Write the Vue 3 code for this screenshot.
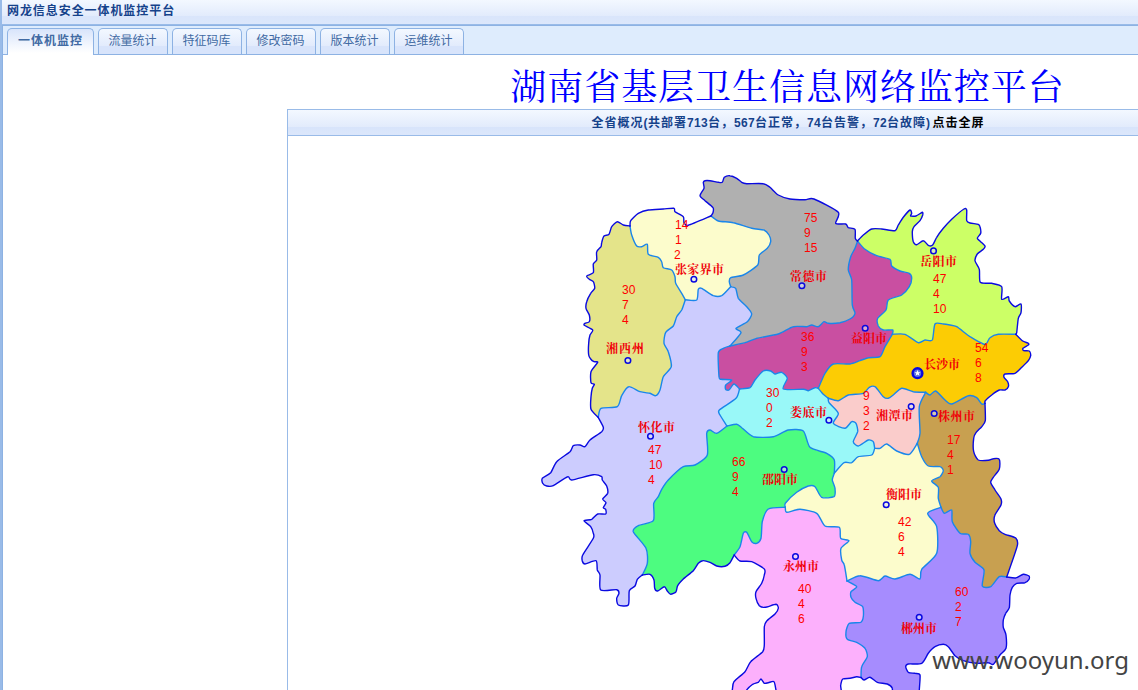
<script setup>
const tabs = ['流量统计', '特征码库', '修改密码', '版本统计', '运维统计']

const summary = [
  { t: '全省概况' }, { t: '(', n: true }, { t: '共部署' }, { t: '713', n: true }, { t: '台，' },
  { t: '567', n: true }, { t: '台正常，' }, { t: '74', n: true }, { t: '台告警，' },
  { t: '72', n: true }, { t: '台故障' }, { t: ')', n: true },
]

// Region junctions, in map pixels.
const nodes = {
  A: [630, 226], B: [711, 216], C: [857.5, 241], D: [1015.7, 334.3], E: [985, 403.3],
  F: [1006.7, 577], G: [861, 677.5], H: [734.2, 555], I: [642.3, 575], J: [598.3, 417.5],
  K: [685.3, 299.8], L: [730.7, 286.7], M: [730, 346], N: [739.5, 389], O: [727, 426],
  P: [818.3, 388.3], Q: [892.3, 334.3], R: [828.3, 398.3], S: [925.7, 392.3], T: [917.3, 443.3],
  U: [874.7, 448.3], V: [834.3, 473.3], W: [785.3, 507.3], X: [847, 581], Y: [941, 507.3],
}

// Boundary arcs: from, to, origin x, origin y, then points at three units per pixel.
const arcs = {
  o1: ['J', 'A', 530, 200, '183,628 183,590 187,565 193,553 183,548 183,515 203,487 192,485 182,477 176,465 176,430 180,405 188,390 163,376 165,370 178,365 178,345 168,325 170,305 182,280 194,265 190,245 178,238 170,228 190,218 190,192 200,180 200,155 213,140 215,128 222,108 237,103 245,80 262,65 280,75'],
  o2: ['A', 'B', 530, 200, '302,62 325,40 355,30 400,27 432,25 435,35 460,50 462,68 475,76'],
  o3: ['B', 'C', 690, 160, '69,158 69,143 45,122 30,107 42,85 40,67 45,62 60,62 85,67 97,67 103,52 120,47 140,55 155,67 170,71 220,71 240,82 265,105 300,117 345,119 372,117 445,157 437,190 467,192 475,203 495,208 496,235'],
  o4: ['C', 'D', 840, 190, '70,135 95,117 125,117 165,122 175,105 190,82 210,60 215,70 212,78 228,78 247,67 248,75 240,92 222,110 217,125 220,155 230,164 250,152 265,166 278,165 290,142 310,115 335,88 372,57 380,60 380,92 390,99 415,103 420,110 422,130 412,145 422,155 435,168 430,178 412,192 405,212 418,238 421,277 455,280 485,290 485,328 505,320 508,333 525,350 543,342 543,368 535,385 530,428'],
  o5: ['D', 'E', 840, 190, '547,452 565,460 565,465 549,475 551,482 568,483 572,497 565,512 545,532 525,550 495,552 492,562 503,575 505,590 495,600 478,600 455,615 436,632'],
  o6: ['E', 'F', 860, 370, '376,152 365,170 348,188 341,205 341,245 355,270 385,271 400,266 418,268 418,297 400,322 392,337 405,360 423,387 423,405 404,437 404,460 418,482 435,493 467,504 472,527'],
  o7: ['F', 'G', 840, 540, '527,114 550,103 567,108 567,118 555,128 530,130 517,142 510,165 508,203 497,220 490,240 490,262 498,285 498,325 480,345 460,373 445,368 410,370 370,362 345,347 325,320 310,313 285,320 265,340 245,370 205,372 197,380 205,397 225,400 240,405 238,450 238,480 160,480 157,445 142,432 112,427 90,412 72,420'],
  o8: ['G', 'H', 700, 490, '470,560 450,565 428,567 422,585 412,630 235,630 228,600 222,575 205,578 193,580 183,567 175,577 158,583 140,600 120,640 90,640 97,600 102,575 135,545 152,515 188,485 193,465 193,410 200,393 225,372 235,355 228,343 195,352 178,347 168,325 168,305 185,280 193,255 193,237 155,215 120,213'],
  o9: ['H', 'I', 530, 380, '600,548 585,559 560,558 540,547 518,542 505,550 490,572 460,597 443,617 438,635 422,643 412,633 403,620 383,633 374,625 372,600 360,583'],
  o10: ['I', 'J', 530, 380, '322,598 315,618 298,632 295,675 265,675 260,655 267,640 260,629 212,630 210,585 202,570 198,542 165,552 157,543 158,525 190,475 190,460 182,440 162,422 185,418 203,402 227,402 227,388 220,383 228,368 218,357 233,340 230,318 217,300 215,290 190,284 125,300 113,290 70,317 50,318 38,310 37,295 62,278 80,245 120,215 130,197 150,195 165,200 180,180 215,155 220,142'],
  i1: ['A', 'K', 530, 200, '305,105 320,138 335,140 352,133 355,163 385,172 395,185 400,203 425,210 435,230 437,250 455,280'],
  i2: ['K', 'J', 530, 200, '455,330 440,350 430,378 407,397 402,430 415,455 424,500 400,530 390,570 377,587 360,580 330,575 296,560 275,587 262,620 213,625'],
  i3: ['K', 'L', 530, 200, '500,300 505,268 515,265 550,287 575,287'],
  i4: ['B', 'L', 690, 160, '85,183 130,188 185,205 222,210 237,225 242,245 232,265 208,285 203,315 160,345 122,353 118,365'],
  i5: ['L', 'M', 690, 160, '137,385 145,415 170,440 185,462 172,485 138,505 153,518'],
  i6: ['M', 'C', 690, 160, '165,548 200,535 265,522 310,500 350,500 365,495 385,500 402,485 415,490 450,488 480,477 495,460 487,435 485,360 475,330 482,290 495,265'],
  i7: ['M', 'N', 690, 160, '100,565 85,578 87,650 93,658 125,660 107,675 107,688 117,690 132,672'],
  i8: ['N', 'P', 700, 360, '150,83 165,60 190,33 212,33 225,42 245,37 262,55 250,87 310,88 325,92 345,83'],
  i9: ['P', 'Q', 840, 190, '-45,550 -20,522 30,522 60,512 85,503 120,500 135,470'],
  i10: ['C', 'Q', 840, 190, '75,178 110,197 150,208 155,228 180,243 208,250 215,265 208,290 185,315 145,330 138,360 113,385 115,408 130,420 158,420'],
  i11: ['Q', 'D', 840, 190, '195,433 235,458 255,450 277,450 285,402 310,402 330,405 350,410 390,440 430,462 440,460 450,443 475,433'],
  i12: ['P', 'R', 700, 360, '370,103'],
  i13: ['R', 'S', 860, 370, '-65,92 -35,75 10,70 28,52 45,50 70,80 85,85 100,75 125,55 160,65'],
  i14: ['S', 'E', 860, 370, '210,75 227,63 255,90 275,102 325,77 350,83 365,102'],
  i15: ['S', 'T', 860, 370, '178,110 180,190'],
  i16: ['R', 'U', 700, 360, '387,128 415,160 400,190 435,205 455,185 468,190 473,215 460,245 475,258 505,240 520,245'],
  i17: ['U', 'T', 860, 370, '60,235 80,222 110,243 148,253'],
  i18: ['U', 'V', 700, 360, '515,285 475,290 455,308 432,308'],
  i19: ['O', 'V', 700, 360, '110,193 125,203 160,230 220,230 265,210 310,213 330,262 380,280 403,300'],
  i20: ['N', 'O', 700, 360, '108,115 58,150 60,165'],
  i21: ['I', 'O', 530, 380, '352,550 348,505 310,455 325,437 370,422 371,370 385,350 395,328 415,300 460,260 495,255 532,225 530,160 540,150 560,160'],
  i22: ['V', 'W', 700, 360, '397,360 405,385 402,410 365,412 345,380 325,378 290,397 256,430'],
  i23: ['H', 'W', 700, 490, '120,170 130,130 140,127 155,155 170,160 183,145 187,95 205,57'],
  i24: ['W', 'X', 700, 490, '260,67 300,58 350,70 375,108 418,112 422,145 447,152 423,175 425,210 433,225'],
  i25: ['T', 'Y', 860, 370, '185,260 205,288 240,290 250,302 240,320 215,333 235,352 235,385'],
  i26: ['Y', 'F', 860, 370, '253,430 275,420 277,455 300,490 325,493 332,515 330,550 345,577 372,600 367,648 392,650 418,620'],
  i27: ['Y', 'X', 860, 370, '203,430 230,470 230,550 185,598 180,627 150,613 105,627 75,618 55,632 0,617'],
  i28: ['X', 'G', 840, 540, '50,140 33,155 33,172 45,187 68,200 70,230 62,247 28,250 18,275 22,298 50,307 75,325 82,350 65,380'],
}

const regions = [
  ['#e4e48a', 'o1 i1 i2'],
  ['#fcfccc', 'o2 i4 -i3 -i1'],
  ['#b0b0b0', 'o3 -i6 -i5 -i4'],
  ['#c94fa1', 'i6 i10 -i9 -i8 -i7'],
  ['#ccff66', 'o4 -i11 -i10'],
  ['#fccc04', 'i11 o5 -i14 -i13 -i12 i9'],
  ['#facccb', 'i13 i15 -i17 -i16'],
  ['#c8a050', 'i14 o6 -i26 -i25 -i15'],
  ['#99f8f8', 'i8 i12 i16 i18 -i19 -i20'],
  ['#4dfc80', 'i19 i22 -i23 o9 i21'],
  ['#ccccfe', 'o10 -i2 i3 i5 i7 i20 -i21'],
  ['#fcfccc', 'i17 i25 i27 -i24 -i22 -i18'],
  ['#fcb0fc', 'i23 i24 i28 o8'],
  ['#a68cfe', 'i26 o7 -i28 -i27'],
]

const points = {}
for (const [k, [a, b, ox, oy, s]] of Object.entries(arcs)) {
  const mid = s.split(' ').map((p) => {
    const [x, y] = p.split(',').map(Number)
    return [ox + x / 3, oy + y / 3]
  })
  points[k] = [nodes[a], ...mid, nodes[b]]
}

// Cubic segments through the points, with a light tension.
function curve(p) {
  const k = 0.12
  let d = ''
  for (let i = 0; i < p.length - 1; i++) {
    const a = p[i - 1] || p[i]
    const b = p[i]
    const c = p[i + 1]
    const e = p[i + 2] || c
    const n = [b[0] + (c[0] - a[0]) * k, b[1] + (c[1] - a[1]) * k, c[0] - (e[0] - b[0]) * k, c[1] - (e[1] - b[1]) * k, c[0], c[1]]
    d += 'C' + n.map((v) => v.toFixed(1)).join(' ')
  }
  return d
}

const fills = regions.map(([color, list]) => {
  const parts = list.split(' ').map((k) => (k[0] === '-' ? [...points[k.slice(1)]].reverse() : points[k]))
  return { color, d: 'M' + parts[0][0].join(' ') + parts.map(curve).join('') + 'Z' }
})
const lines = Object.keys(points)
  .sort()
  .map((k) => ({ k, outer: k[0] === 'o', d: 'M' + points[k][0].join(' ') + curve(points[k]) }))

// name, label x / baseline, label width, marker x / y, figures x / first baseline
const cities = [
  { name: '张家界市', x: 675, y: 274, w: 49, mx: 693.7, my: 279, nums: [[675, 14], [675, 1], [674, 2]], ny: 229 },
  { name: '湘西州', x: 606, y: 353, w: 38, mx: 627.7, my: 360.3, nums: [[622, 30], [622, 7], [622, 4]], ny: 294 },
  { name: '常德市', x: 790, y: 281, w: 37, mx: 801.7, my: 285.5, nums: [[804, 75], [804, 9], [804, 15]], ny: 222 },
  { name: '岳阳市', x: 920, y: 266, w: 37, mx: 933.3, my: 250.7, nums: [[933, 47], [933, 4], [933, 10]], ny: 283 },
  { name: '益阳市', x: 851, y: 343, w: 36, mx: 865, my: 328, nums: [[801, 36], [801, 9], [801, 3]], ny: 341 },
  { name: '长沙市', x: 924, y: 369, w: 36, nums: [[975, 54], [975, 6], [975, 8]], ny: 352 },
  { name: '湘潭市', x: 876, y: 420, w: 37, mx: 911, my: 406.3, nums: [[863, 9], [863, 3], [863, 2]], ny: 400 },
  { name: '株州市', x: 938, y: 421, w: 37, mx: 934, my: 413.3, nums: [[947, 17], [947, 4], [947, 1]], ny: 444 },
  { name: '娄底市', x: 790, y: 417, w: 37, mx: 828.7, my: 420, nums: [[766, 30], [766, 0], [766, 2]], ny: 397 },
  { name: '怀化市', x: 638, y: 432, w: 37, mx: 650.3, my: 436, nums: [[648, 47], [649, 10], [648, 4]], ny: 454 },
  { name: '邵阳市', x: 762, y: 484, w: 36, mx: 784, my: 469.3, nums: [[732, 66], [732, 9], [732, 4]], ny: 466 },
  { name: '衡阳市', x: 886, y: 499, w: 36, mx: 886, my: 504.5, nums: [[898, 42], [898, 6], [898, 4]], ny: 526 },
  { name: '永州市', x: 783, y: 571, w: 36, mx: 795.3, my: 556.3, nums: [[798, 40], [798, 4], [798, 6]], ny: 593 },
  { name: '郴州市', x: 901, y: 633, w: 36, mx: 919, my: 617, nums: [[955, 60], [955, 2], [955, 7]], ny: 596 },
]
</script>

<template>
  <div class="app">
    <div class="topbar">网龙信息安全一体机监控平台</div>
    <div class="body">
      <div class="tabs">
        <div class="tab active">一体机监控</div>
        <div v-for="t in tabs" :key="t" class="tab">{{ t }}</div>
      </div>
      <div class="content">
        <h1 class="headline">湖南省基层卫生信息网络监控平台</h1>
        <div class="panel">
          <div class="panel-head">
            <span v-for="(s, i) in summary" :key="i" :class="s.n ? 'num' : 'cjk'">{{ s.t }}</span>
            <span class="full">点击全屏</span>
          </div>
          <svg class="map" width="850" height="554" viewBox="288 136 850 554">
            <path v-for="(f, i) in fills" :key="i" :d="f.d" :fill="f.color" />
            <path v-for="l in lines" :key="l.k" :d="l.d" :class="l.outer ? 'outer' : 'inner'" />
            <g v-for="c in cities" :key="c.name">
              <text :x="c.x" :y="c.y" class="city" :textLength="c.w">{{ c.name }}</text>
              <circle v-if="c.mx" :cx="c.mx + 0.2" :cy="c.my + 0.2" r="2.8" class="dot" />
              <text v-for="(n, i) in c.nums" :key="i" :x="n[0]" :y="c.ny + i * 15" class="fig">{{ n[1] }}</text>
            </g>
            <g>
              <circle cx="917.5" cy="373.2" r="4.9" class="capital" />
              <path d="M917.5 370.1l.9 2.1h2.1l-1.7 1.4.6 2.2-1.9-1.3-1.9 1.3.6-2.2-1.7-1.4h2.1z" class="star" />
            </g>
          </svg>
        </div>
      </div>
    </div>
    <div class="watermark">www.wooyun.org</div>
  </div>
</template>

<style>
body {
  margin: 0;
  overflow: hidden;
}
</style>

<style scoped>
.app {
  position: relative;
  box-sizing: border-box;
  width: 1138px;
  height: 690px;
  overflow: hidden;
  border-left: 2px solid #99bbe8;
  background: #fff;
  font-family: "Liberation Sans", "Noto Sans CJK SC", sans-serif;
  font-size: 12px;
  display: flex;
  flex-direction: column;
}
.topbar {
  box-sizing: border-box;
  height: 25px;
  flex: none;
  padding-left: 5px;
  line-height: 23px;
  border-bottom: 1px solid #99bbe8;
  background: linear-gradient(#f3f8ff 0, #e2ebfc 16px, #d9e5fb 16px, #dce7fb 100%);
  color: #15428b;
  font-weight: bold;
  letter-spacing: 0.93px;
}
.body {
  flex: 1;
  border-left: 1px solid #8db2e3;
  border-top: 1px solid #8db2e3;
  display: flex;
  flex-direction: column;
}
.tabs {
  box-sizing: border-box;
  height: 29px;
  flex: none;
  display: flex;
  align-items: flex-end;
  gap: 4px;
  padding-left: 4px;
  background: #deecfd;
  border-bottom: 1px solid #8db2e3;
}
.tab {
  box-sizing: border-box;
  width: 70px;
  height: 26px;
  padding-right: 1px;
  border: 1px solid #8db2e3;
  border-bottom: 0;
  border-radius: 5px 5px 0 0;
  background: linear-gradient(#f3f8ff 0, #e2ebfc 17px, #d8e4fb 17px, #d8e4fb 100%);
  color: #416aa3;
  line-height: 25px;
  text-align: center;
}
.tab.active {
  width: 87px;
  height: 27px;
  padding-right: 0;
  margin-bottom: -1px;
  background: linear-gradient(#d8e4fb, #fff 24px);
  font-weight: bold;
  letter-spacing: 1px;
}
.content {
  flex: 1;
  padding-left: 284px;
}
.headline {
  width: 1000px;
  height: 54px;
  margin: 0;
  padding: 6px 0 0 1px;
  box-sizing: border-box;
  line-height: 48px;
  font-family: "Noto Serif CJK SC", "Noto Sans CJK SC", serif;
  font-size: 36px;
  letter-spacing: 0.97px;
  font-weight: 400;
  text-align: center;
  color: #00f;
}
.panel {
  width: 1000px;
  border: 1px solid #99bbe8;
}
.panel-head {
  box-sizing: border-box;
  height: 26px;
  border-bottom: 1px solid #99bbe8;
  background: linear-gradient(#f3f8ff 0, #e2ebfc 17px, #d8e4fb 17px, #dce7fb 100%);
  color: #15428b;
  display: flex;
  justify-content: center;
  font-weight: bold;
  line-height: 27px;
}
.cjk,
.full {
  letter-spacing: 1px;
}
.num {
  letter-spacing: 0.33px;
}
.full {
  margin-left: 2px;
  color: #000;
}
.map {
  display: block;
}
.outer,
.inner {
  fill: none;
  stroke-width: 1.4;
  stroke-linejoin: round;
  stroke-linecap: round;
}
.outer {
  stroke: #0a0ae0;
}
.inner {
  stroke: #1a86ea;
}
.city {
  font: bold 12px "Liberation Serif", "Noto Serif CJK SC", "Noto Sans CJK SC", serif;
  fill: #f00008;
}
.fig {
  font-size: 12px;
  fill: #f00;
}
.dot {
  fill: #dfe6f4;
  fill-opacity: 0.6;
  stroke: #0808e0;
  stroke-width: 1.5;
}
.capital {
  fill: #5a6fe0;
  stroke: #0808e0;
  stroke-width: 2.4;
}
.star {
  fill: #fff;
}
.watermark {
  position: absolute;
  right: 9px;
  bottom: 14px;
  font: 24px/32px "Noto Sans", sans-serif;
  color: #444;
}
</style>
